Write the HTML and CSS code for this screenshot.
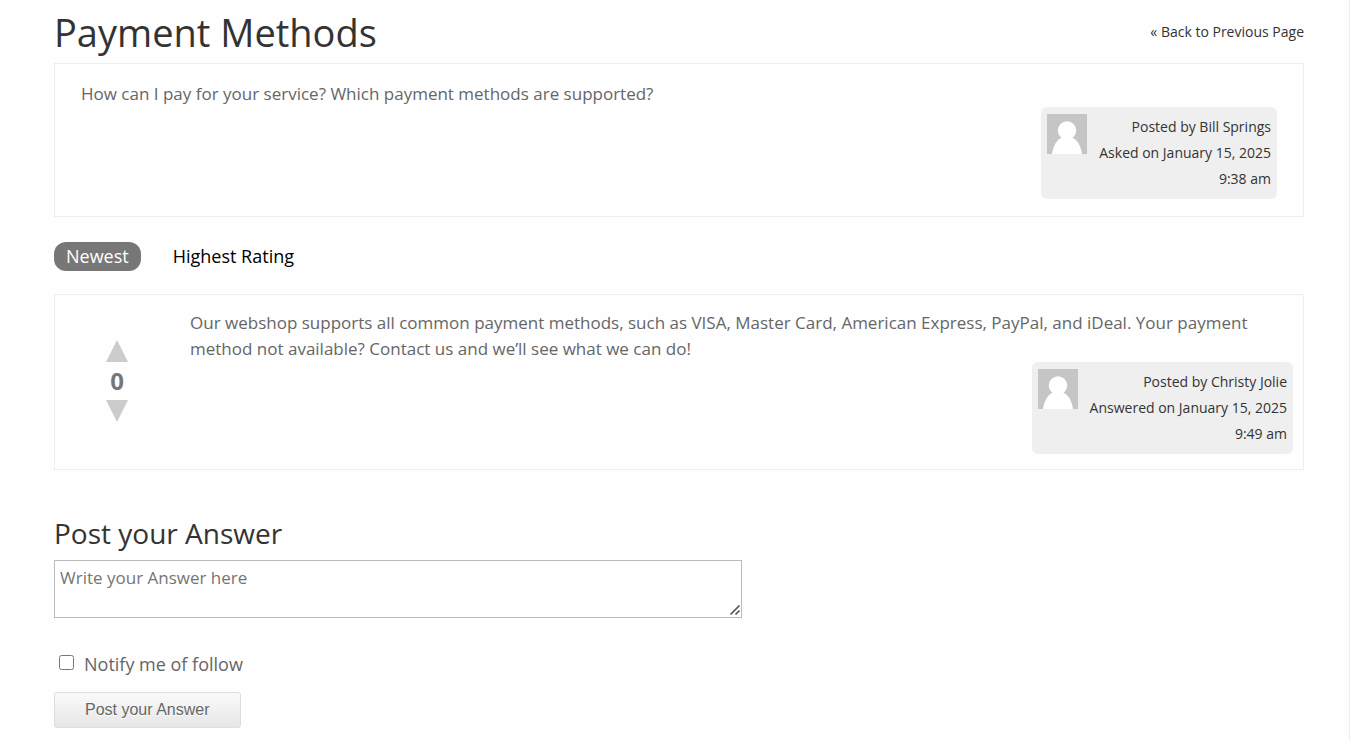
FILE: index.html
```html
<!DOCTYPE html>
<html lang="en">
<head>
  <meta charset="UTF-8">
  <meta name="viewport" content="width=device-width, initial-scale=1">
  <title>Payment Methods</title>
  <link rel="stylesheet" href="styles.css">
</head>
<body>

  <main class="page">
    <header class="page-header">
      <h1>Payment Methods</h1>
      <a class="back" href="#">&laquo; Back to Previous Page</a>
    </header>

    <!-- Question -->
    <article class="box question">
      <p>How can I pay for your service? Which payment methods are supported?</p>
      <div class="author">
        <svg class="avatar" viewBox="0 0 40 40" aria-hidden="true">
          <rect width="40" height="40" fill="#c5c5c5"/>
          <circle cx="20" cy="16.500" r="9.200" fill="#fff"/>
          <path d="M5 40C6 32 10 25 15.500 23.500H24.500C30 25 34 32 35 40Z" fill="#fff"/>
        </svg>
        <div class="author-info">
          <div>Posted by Bill Springs</div>
          <div>Asked on January 15, 2025</div>
          <div>9:38 am</div>
        </div>
      </div>
    </article>

    <nav class="sort">
      <a class="active" href="#">Newest</a>
      <a href="#">Highest Rating</a>
    </nav>

    <!-- Answer -->
    <article class="box answer">
      <div class="votes">
        <button type="button" class="vote" aria-label="Vote up">
          <svg viewBox="0 0 22 22" aria-hidden="true"><path d="M11 0L22 22H0Z"/></svg>
        </button>
        <span class="score">0</span>
        <button type="button" class="vote" aria-label="Vote down">
          <svg viewBox="0 0 22 22" aria-hidden="true"><path d="M0 0H22L11 22Z"/></svg>
        </button>
      </div>
      <div class="answer-body">
        <p>Our webshop supports all common payment methods, such as VISA, Master Card, American Express, PayPal, and iDeal. Your payment method not available? Contact us and we’ll see what we can do!</p>
        <div class="author">
          <svg class="avatar" viewBox="0 0 40 40" aria-hidden="true">
            <rect width="40" height="40" fill="#c5c5c5"/>
            <circle cx="20" cy="16.500" r="9.200" fill="#fff"/>
            <path d="M5 40C6 32 10 25 15.500 23.500H24.500C30 25 34 32 35 40Z" fill="#fff"/>
          </svg>
          <div class="author-info">
            <div>Posted by Christy Jolie</div>
            <div>Answered on January 15, 2025</div>
            <div>9:49 am</div>
          </div>
        </div>
      </div>
    </article>

    <form class="answer-form">
      <h2><label for="answer">Post your Answer</label></h2>
      <textarea id="answer" placeholder="Write your Answer here"></textarea>
      <div class="notify">
        <input type="checkbox" id="notify">
        <label for="notify">Notify me of follow</label>
      </div>
      <button type="submit" class="submit">Post your Answer</button>
    </form>
  </main>

</body>
</html>
```
FILE: styles.css
```css
* {
  box-sizing: border-box;
}

body {
  margin: 0;
  background: #fefefe;
  color: #666;
  font-family: "Open Sans", sans-serif;
  font-size: 18px;
  line-height: 26px;
}

h1, h2, p {
  margin: 0;
}

h1, h2 {
  color: #333;
  font-weight: 400;
}

a {
  text-decoration: none;
}

.page {
  min-height: 100vh;
  padding: 0 45px 12px 54px;
  border-right: 1px solid #eee;
}

.page-header {
  display: flex;
  justify-content: space-between;
  align-items: center;
  height: 63px;
}

h1 {
  font-size: 38px;
  line-height: 52px;
}

.back {
  color: #333;
  font-size: 14px;
}

.box {
  border: 1px solid #eee;
}

.box p {
  font-size: 17px;
}

.question {
  padding: 17px 26px;
}

/* Author card */
.author {
  display: flex;
  gap: 12px;
  width: fit-content;
  margin-left: auto;
  padding: 7px 6px;
  border-radius: 6px;
  background: #efefef;
  color: #333;
  font-size: 14px;
  text-align: right;
}

.avatar {
  width: 40px;
  height: 40px;
}

/* Sorting */
.sort {
  display: flex;
  gap: 20px;
  margin: 25px 0 23px;
}

.sort a {
  padding: 0 12px;
  border-radius: 12px;
  color: #000;
  line-height: 29px;
}

.sort .active {
  background: #777;
  color: #fff;
}

/* Answer */
.answer {
  display: flex;
  padding: 15px 10px 15px 0;
}

.votes {
  display: flex;
  flex-direction: column;
  align-items: center;
  flex: none;
  width: 124px;
  margin-right: 11px;
  padding-top: 30px;
}

.vote {
  width: 22px;
  height: 22px;
  padding: 0;
  border: 0;
  background: none;
  cursor: pointer;
}

.vote svg {
  display: block;
  fill: #ccc;
}

.score {
  color: #777;
  font-size: 24px;
  font-weight: 700;
  line-height: 38px;
}

.answer-body {
  flex: 1;
}

/* Form */
.answer-form {
  padding-top: 43px;
}

h2 {
  font-size: 28px;
  line-height: 40px;
}

textarea {
  display: block;
  width: 55%;
  height: 58px;
  margin-top: 7px;
  padding: 4px 5px;
  border: 1px solid #bbb;
  background: #fff;
  color: #666;
  font: 17px/26px "Open Sans", sans-serif;
}

textarea::placeholder {
  color: #757575;
}

textarea::-webkit-resizer {
  background: url("data:image/svg+xml,%3Csvg xmlns='http://www.w3.org/2000/svg' width='15' height='15' stroke='%23555' stroke-width='1.7'%3E%3Cpath d='M4.500 12.500L13.500 3.500M9.500 12.500L13.500 8.500'/%3E%3C/svg%3E") no-repeat right bottom;
}

.notify {
  display: flex;
  align-items: center;
  gap: 10px;
  margin: 33px 0 15px;
}

.notify input {
  width: 15px;
  height: 15px;
  margin: 0 0 4px 5px;
}

.submit {
  height: 36px;
  padding: 0 30px;
  border: 1px solid #ddd;
  border-radius: 3px;
  background: linear-gradient(#fafafa, #e6e6e6);
  color: #666;
  font: 16px "Liberation Sans", Arial, sans-serif;
  text-shadow: 0 1px 0 #fff;
  cursor: pointer;
}
```
